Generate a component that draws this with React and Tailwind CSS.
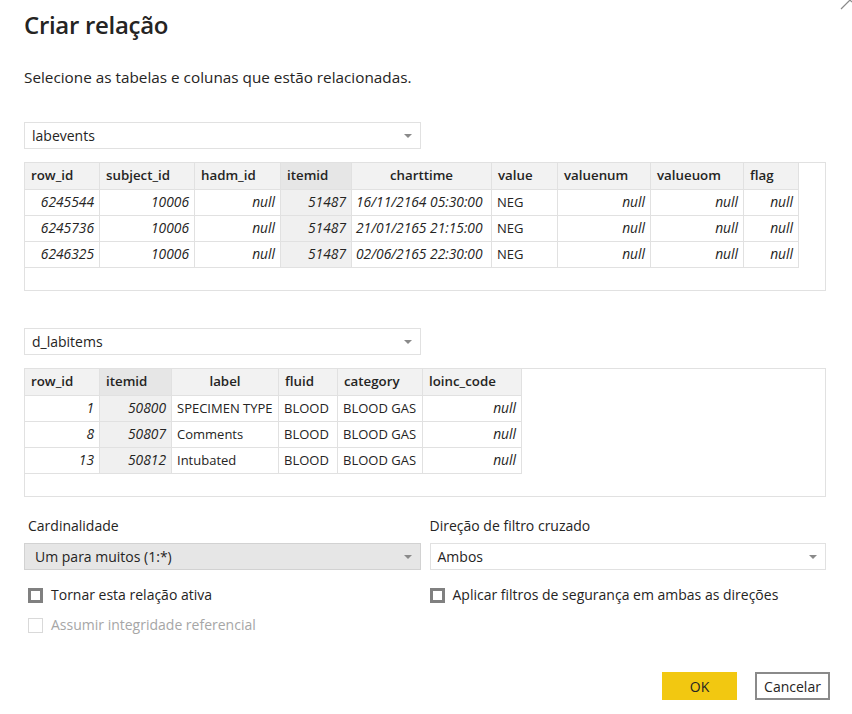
import React from "react";

const FONT = "font-['Open_Sans','Noto_Sans',sans-serif]";

const LAB_COLS = [
  { key: "row_id", w: "w-[75px]", align: "left" },
  { key: "subject_id", w: "w-[95px]", align: "left" },
  { key: "hadm_id", w: "w-[86px]", align: "left" },
  { key: "itemid", w: "w-[71px]", align: "left", key_col: true },
  { key: "charttime", w: "w-[140px]", align: "center" },
  { key: "value", w: "w-[66px]", align: "left" },
  { key: "valuenum", w: "w-[93px]", align: "left" },
  { key: "valueuom", w: "w-[93px]", align: "left" },
  { key: "flag", w: "w-[55px]", align: "left" },
];

const LAB_ROWS = [
  ["6245544", "10006", "null", "51487", "16/11/2164 05:30:00", "NEG", "null", "null", "null"],
  ["6245736", "10006", "null", "51487", "21/01/2165 21:15:00", "NEG", "null", "null", "null"],
  ["6246325", "10006", "null", "51487", "02/06/2165 22:30:00", "NEG", "null", "null", "null"],
];
const LAB_KIND = ["num", "num", "num", "num", "date", "text", "num", "num", "num"];

const ITEM_COLS = [
  { key: "row_id", w: "w-[75px]", align: "left" },
  { key: "itemid", w: "w-[72px]", align: "left", key_col: true },
  { key: "label", w: "w-[107px]", align: "center" },
  { key: "fluid", w: "w-[59px]", align: "left" },
  { key: "category", w: "w-[85px]", align: "left" },
  { key: "loinc_code", w: "w-[99px]", align: "left" },
];
const ITEM_ROWS = [
  ["1", "50800", "SPECIMEN TYPE", "BLOOD", "BLOOD GAS", "null"],
  ["8", "50807", "Comments", "BLOOD", "BLOOD GAS", "null"],
  ["13", "50812", "Intubated", "BLOOD", "BLOOD GAS", "null"],
];
const ITEM_KIND = ["num", "num", "text", "text", "text", "num"];

function Caret() {
  return (
    <svg width="8" height="4" viewBox="0 0 8 4" className="shrink-0">
      <path d="M0 0 H8 L4 4 Z" fill="#8a8a8a" />
    </svg>
  );
}

function Select({ value, disabled }) {
  return (
    <div
      className={`flex items-center justify-between h-[27px] border pr-[8px] text-[14px] text-[#252423] ${
        disabled ? "bg-[#e6e6e6] border-[#d2d2d2] pl-[10px]" : "bg-white border-[#e1e1e1] pl-[7px]"
      }`}
    >
      <span className="leading-none">{value}</span>
      <Caret />
    </div>
  );
}

function Preview({ cols, rows, kinds }) {
  return (
    <div className="h-[129px] border border-[#e1e1e1] bg-white">
      <table className="border-collapse table-fixed -mt-px -ml-px text-[#252423]">
        <thead>
          <tr className="h-[27px]">
            {cols.map((c) => (
              <th
                key={c.key}
                className={`${c.w} border border-[#e1e1e1] px-[6px] text-[13.3px] font-semibold whitespace-nowrap ${
                  c.align === "center" ? "text-center" : "text-left"
                } ${c.key_col ? "bg-[#e6e6e6]" : "bg-[#f2f2f2]"}`}
              >
                {c.key}
              </th>
            ))}
          </tr>
        </thead>
        <tbody>
          {rows.map((r, i) => (
            <tr key={i} className="h-[26px]">
              {r.map((v, j) => {
                const kind = kinds[j];
                return (
                  <td
                    key={j}
                    className={`border border-[#e1e1e1] px-[5px] whitespace-nowrap ${
                      kind === "num"
                        ? "text-right italic text-[13.8px]"
                        : kind === "date"
                        ? "text-left italic text-[13.8px] pl-[4px]"
                        : "text-left text-[13px]"
                    } ${cols[j].key_col ? "bg-[#f0f0f0]" : "bg-white"}`}
                  >
                    {v}
                  </td>
                );
              })}
            </tr>
          ))}
        </tbody>
      </table>
    </div>
  );
}

function Check({ label, disabled }) {
  return (
    <label className={`flex items-center gap-[8px] text-[14px] leading-[20px] ${disabled ? "text-[#a6a6a6]" : "text-[#252423]"}`}>
      <span
        className={`w-[15px] h-[15px] shrink-0 bg-white ${
          disabled ? "border border-[#d9d9d9]" : "border-[3px] border-[#808080]"
        }`}
      />
      {label}
    </label>
  );
}

export default function App() {
  return (
    <div className={`relative w-[852px] h-[714px] bg-white overflow-hidden ${FONT}`}>
      <svg className="absolute right-[0px] top-[0px]" width="12" height="10" viewBox="0 0 12 10">
        <path d="M1 9 L10 0 M10 0 L12 2" stroke="#8a8a8a" strokeWidth="1.2" fill="none" />
      </svg>

      <div className="pl-[24px] pr-[26px]">
        <h1 className="pt-[9px] text-[24px] leading-[32px] font-semibold text-[#252423] tracking-[-0.3px]">
          Criar relação
        </h1>
        <p className="mt-[26px] text-[15.3px] leading-[20px] text-[#252423]">
          Selecione as tabelas e colunas que estão relacionadas.
        </p>

        <div className="mt-[35px] w-[397px]">
          <Select value="labevents" />
        </div>
        <div className="mt-[13px]">
          <Preview cols={LAB_COLS} rows={LAB_ROWS} kinds={LAB_KIND} />
        </div>

        <div className="mt-[37px] w-[397px]">
          <Select value="d_labitems" />
        </div>
        <div className="mt-[13px]">
          <Preview cols={ITEM_COLS} rows={ITEM_ROWS} kinds={ITEM_KIND} />
        </div>

        <div className="mt-[19px] grid grid-cols-2 gap-x-[9px]">
          <div className="flex flex-col">
            <span className="pl-[4px] text-[14px] leading-[20px] text-[#252423]">Cardinalidade</span>
            <div className="mt-[7px] w-[397px]">
              <Select value="Um para muitos (1:*)" disabled />
            </div>
            <div className="mt-[15px] pl-[4px] flex flex-col gap-[10px]">
              <Check label="Tornar esta relação ativa" />
              <Check label="Assumir integridade referencial" disabled />
            </div>
          </div>
          <div className="flex flex-col">
            <span className="text-[14px] leading-[20px] text-[#252423]">Direção de filtro cruzado</span>
            <div className="mt-[7px]">
              <Select value="Ambos" />
            </div>
            <div className="mt-[15px]">
              <Check label="Aplicar filtros de segurança em ambas as direções" />
            </div>
          </div>
        </div>

        <div className="mt-[37px] flex justify-end gap-[18px]">
          <button className="w-[75px] h-[28px] bg-[#f2c811] text-[14px] text-[#252423]">OK</button>
          <button className="w-[75px] h-[28px] bg-white border-2 border-[#8a8a8a] text-[14px] text-[#252423] mr-[-4px]">
            Cancelar
          </button>
        </div>
      </div>
    </div>
  );
}
